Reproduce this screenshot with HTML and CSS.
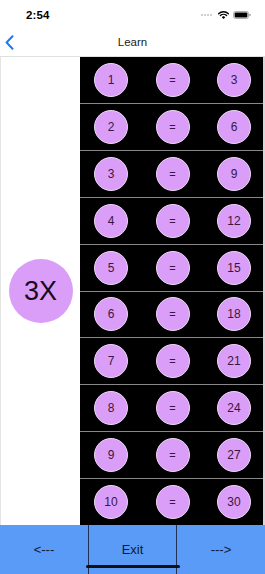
FILE: index.html
```html
<!DOCTYPE html>
<html>
<head>
<meta charset="utf-8">
<link rel="stylesheet" href="styles.css">
</head>
<body>
<div class="screen">
  <div class="status">
    <span class="time">2:54</span>
    <span class="icons">
      <svg class="signal" width="12" height="4" viewBox="0 0 12 4"><circle cx="1" cy="2" r="0.9" fill="#bbb"/><circle cx="4" cy="2" r="0.9" fill="#bbb"/><circle cx="7" cy="2" r="0.9" fill="#bbb"/><circle cx="10" cy="2" r="0.9" fill="#bbb"/></svg>
      <svg class="wifi" width="11" height="8" viewBox="0 0 11 8"><path d="M0.6 2.8 A7 7 0 0 1 10.4 2.8" stroke="#000" stroke-width="1.4" fill="none" stroke-linecap="round"/><path d="M2.4 4.6 A4.5 4.5 0 0 1 8.6 4.6" stroke="#000" stroke-width="1.4" fill="none" stroke-linecap="round"/><path d="M4.1 6.3 A2 2 0 0 1 6.9 6.3 L5.5 7.6 Z" fill="#000" stroke="#000" stroke-width="0.8" stroke-linejoin="round"/></svg>
      <svg class="battery" width="18" height="8" viewBox="0 0 18 8"><rect x="0.5" y="0.5" width="15" height="7" rx="2" fill="none" stroke="#999" stroke-width="0.8"/><rect x="1.6" y="1.6" width="12.8" height="4.8" rx="1" fill="#000"/><rect x="16.3" y="2.7" width="1.2" height="2.6" rx="0.5" fill="#999"/></svg>
    </span>
  </div>
  <div class="nav">
    <svg class="back" width="9" height="15" viewBox="0 0 9 15"><path d="M7.5 1.2 L1.6 7.5 L7.5 13.8" stroke="#1a7cf5" stroke-width="2" fill="none" stroke-linecap="round" stroke-linejoin="round"/></svg>
    <span class="title">Learn</span>
  </div>
  <div class="main">
    <div class="side">
      <div class="big">3X</div>
    </div>
    <div class="table">
      <div class="row"><span class="c">1</span><span class="c eq">=</span><span class="c">3</span></div>
      <div class="row"><span class="c">2</span><span class="c eq">=</span><span class="c">6</span></div>
      <div class="row"><span class="c">3</span><span class="c eq">=</span><span class="c">9</span></div>
      <div class="row"><span class="c">4</span><span class="c eq">=</span><span class="c">12</span></div>
      <div class="row"><span class="c">5</span><span class="c eq">=</span><span class="c">15</span></div>
      <div class="row"><span class="c">6</span><span class="c eq">=</span><span class="c">18</span></div>
      <div class="row"><span class="c">7</span><span class="c eq">=</span><span class="c">21</span></div>
      <div class="row"><span class="c">8</span><span class="c eq">=</span><span class="c">24</span></div>
      <div class="row"><span class="c">9</span><span class="c eq">=</span><span class="c">27</span></div>
      <div class="row"><span class="c">10</span><span class="c eq">=</span><span class="c">30</span></div>
    </div>
    <div class="edge"></div>
  </div>
  <div class="bottom">
    <div class="btn">&lt;---</div>
    <div class="btn mid">Exit</div>
    <div class="btn">---&gt;</div>
    <div class="home"></div>
  </div>
</div>
</body>
</html>
```
FILE: styles.css
```css
* { box-sizing: border-box; }
html, body { margin: 0; padding: 0; background: #fff; }
body { font-family: "Liberation Sans", Arial, sans-serif; color: #000; }
.screen { width: 265px; height: 574px; display: flex; flex-direction: column; overflow: hidden; }
.status { height: 28px; display: flex; align-items: center; justify-content: space-between; padding: 2px 14px 0 26px; }
.time { font-size: 11.5px; font-weight: 700; letter-spacing: 0.1px; }
.icons { display: flex; align-items: center; gap: 4px; }
.signal { margin-right: 1px; }
.nav { height: 29px; position: relative; display: flex; align-items: center; justify-content: center; border-bottom: 1px solid #e0e0e0; }
.back { position: absolute; left: 5px; top: 7px; }
.title { font-size: 11.5px; font-weight: 500; color: #222; }
.main { height: 468px; display: flex; }
.side { width: 80px; border-left: 1px solid #e4e4e4; display: flex; align-items: center; justify-content: center; background: #fff; }
.big { width: 64px; height: 64px; border-radius: 50%; background: #da9ef8; display: flex; align-items: center; justify-content: center; font-size: 27px; color: #1a0a20; }
.table { width: 183px; background: #000; display: flex; flex-direction: column; }
.row { flex: 1; display: flex; align-items: center; justify-content: space-between; padding: 0 12px 0 14px; border-bottom: 1.5px solid #888; }
.row:last-child { border-bottom: none; }
.c { width: 34px; height: 34px; border-radius: 50%; background: #da9ef8; border: 1px solid #ecd6f4; display: flex; align-items: center; justify-content: center; font-size: 12px; color: #3a1642; }
.eq { font-size: 11px; }
.edge { flex: 1; background: #d8d8d8; }
.bottom { flex: 1; background: #5a9bf7; display: flex; position: relative; }
.btn { flex: 1; display: flex; align-items: center; justify-content: center; font-size: 13px; color: #0f1a33; padding-bottom: 1px; }
.mid { flex: 0 0 89px; border-left: 1px solid #1f2f55; border-right: 1px solid #1f2f55; }
.home { position: absolute; left: 86px; bottom: 6px; width: 94px; height: 3px; border-radius: 2px; background: #111; }
```
